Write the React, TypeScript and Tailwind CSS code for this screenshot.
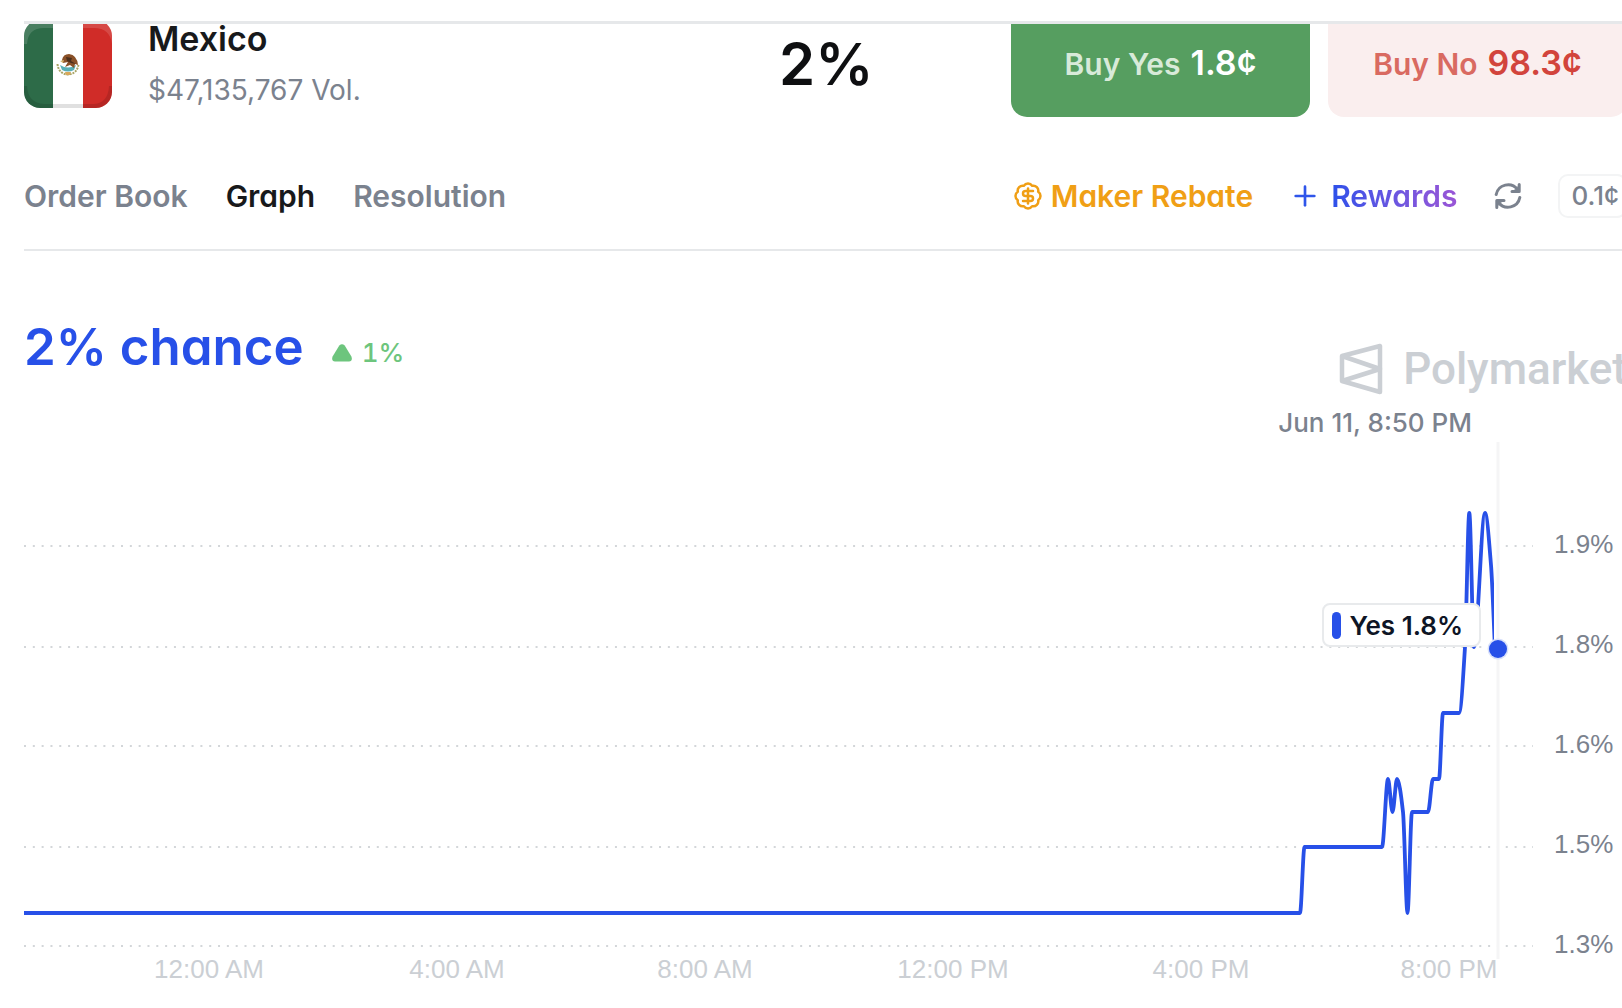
import { BadgeDollarSign, Plus } from 'lucide-react'

const tabs = ['Order Book', 'Graph', 'Resolution']
const yLabels = ['1.9%', '1.8%', '1.6%', '1.5%', '1.3%']
const xLabels = ['12:00 AM', '4:00 AM', '8:00 AM', '12:00 PM', '4:00 PM', '8:00 PM']
const gridLines = [106, 207, 306, 407, 506]

const points = [
  [0, 473], [1276, 473], [1280.5, 407], [1358, 407], [1364, 339], [1368.5, 372],
  [1373, 339], [1379, 372], [1383.5, 473], [1388, 372], [1404, 372], [1409, 339],
  [1415, 339], [1419, 273], [1435, 273], [1441, 207], [1445.3, 73], [1450, 207],
  [1461, 73], [1467, 125], [1471, 209],
]

// monotone cubic interpolation, so flat steps never overshoot
function linePath(pts: number[][]) {
  const slopes = pts.slice(1).map((p, i) => (p[1] - pts[i][1]) / (p[0] - pts[i][0]))
  const tangents = pts.map((_, i) => {
    const a = slopes[i - 1]
    const b = slopes[i]
    if (a === undefined) return b
    if (b === undefined) return a
    return a * b <= 0 ? 0 : (2 * a * b) / (a + b)
  })
  let d = `M${pts[0][0]},${pts[0][1]}`
  for (let i = 1; i < pts.length; i++) {
    const [x0, y0] = pts[i - 1]
    const [x1, y1] = pts[i]
    const h = (x1 - x0) / 3
    d += `C${x0 + h},${y0 + h * tangents[i - 1]} ${x1 - h},${y1 - h * tangents[i]} ${x1},${y1}`
  }
  return d
}

function MexicoFlag() {
  return (
    <svg
      className="h-[84px] w-[88px] shrink-0"
      viewBox="0 4 88 84"
      role="img"
      aria-label="Flag of Mexico"
    >
      <clipPath id="flag">
        <rect width="88" height="88" rx="16" />
      </clipPath>
      <g clipPath="url(#flag)">
        <rect width="88" height="88" fill="#fff" />
        <rect width="29" height="88" fill="#2d6b48" />
        <rect x="59" width="29" height="88" fill="#d02c28" />
        <path d="M0 0h88v24q-2-16-18-16H20Q4 8 3 24H0z" fill="#fff" opacity=".14" />
        <path d="M0 66h3q1 17 17 18h50q14-1 15-18h3v22H0z" fill="#000" opacity=".12" />
        <path
          d="M33.5 44c1 14 20 14 21 0"
          fill="none"
          stroke="#a9a566"
          strokeWidth="2"
          strokeDasharray="2 1"
        />
        <path d="M36 45q8 5 16 0l-2 5q-6 3-12 0z" fill="#58aeb5" />
        <path d="M41 52h6l-1 3h-4z" fill="#d9a85b" />
        <path d="M38 40q1-6 7-6 8 1 9 11l-3-1-1 4-4-3-5 2 3-5-5 1z" fill="#8a5128" />
        <path d="M42 37l6 1-1 3 5 3-5-1-4-2z" fill="#4c2f1c" />
        <path d="M36 41l4-1-1 3z" fill="#d6b36c" />
      </g>
    </svg>
  )
}

function RefreshIcon() {
  return (
    <svg
      className="size-7"
      viewBox="0 0 28 28"
      fill="none"
      stroke="currentColor"
      strokeWidth="3"
      strokeLinecap="round"
      strokeLinejoin="round"
    >
      <path d="M2.2 12.5A12 12 0 0 1 23.5 7.5" />
      <path d="M25.8 15.5A12 12 0 0 1 4.5 20.5" />
      <path d="M25.2 2.5v7h-7.2" />
      <path d="M2.8 25.5v-7h7.2" />
      <path d="M25 4v5h-5z" fill="currentColor" strokeWidth="1" />
      <path d="M3 24v-5h5z" fill="currentColor" strokeWidth="1" />
    </svg>
  )
}

function MarketHeader() {
  return (
    <header className="flex items-start border-t-3 border-[#e6e8ea]">
      <MexicoFlag />
      <div className="ml-9 flex-1">
        <h1 className="text-[34px] leading-[30px] font-semibold text-[#18191b]">Mexico</h1>
        <p className="mt-[18px] text-[28px] leading-9 text-[#7b828e]">$47,135,767 Vol.</p>
      </div>
      <div className="flex h-20 w-[232px] items-center text-[58px] font-semibold text-[#0e0f11]">
        2%
      </div>
      <div className="flex gap-[18px] font-semibold">
        <button className="flex h-[93px] w-[299px] items-baseline justify-center gap-[10px] rounded-b-2xl bg-[#569e60] pt-[13px] text-[30px] text-[#d8ead9]">
          Buy Yes <span className="text-[34px] text-white">1.8¢</span>
        </button>
        <button className="flex h-[93px] w-[299px] items-baseline justify-center gap-[10px] rounded-b-2xl bg-[#faeeee] pt-[13px] text-[30px] text-[#d96a61]">
          Buy No <span className="text-[34px] text-[#d2443c]">98.3¢</span>
        </button>
      </div>
    </header>
  )
}

function Toolbar() {
  return (
    <nav className="mt-[57px] flex items-center justify-between border-b-2 border-[#e6e8ea] pb-[31px] text-[30px] leading-[44px] font-semibold">
      <div className="flex gap-[38px]">
        {tabs.map((t) => (
          <button key={t} className={t === 'Graph' ? 'text-[#18191b]' : 'text-[#7b828e]'}>
            {t}
          </button>
        ))}
      </div>
      <div className="flex items-center">
        <button className="flex items-center gap-2 text-[#f09f15]">
          <BadgeDollarSign className="size-[30px]" strokeWidth={2} />
          Maker Rebate
        </button>
        <button className="ml-9 flex items-center gap-[10px] text-[#2f55ea]">
          <Plus className="size-8" strokeWidth={2} />
          <span className="bg-linear-to-r from-[#2a50ea] to-[#9a55d6] bg-clip-text text-transparent">
            Rewards
          </span>
        </button>
        <button aria-label="Refresh" className="ml-9 text-[#7b828e]">
          <RefreshIcon />
        </button>
        <button className="ml-9 h-11 rounded-[10px] border-2 border-[#f3f4f5] pr-[6px] pl-3 text-[26px] leading-10 font-medium text-[#7b828e]">
          0.1¢
        </button>
      </div>
    </nav>
  )
}

function Logo() {
  return (
    <div className="flex items-center gap-5 font-[Roboto,sans-serif] text-[44px] leading-[52px] font-medium text-[#cbcfd4]">
      <svg
        className="h-[52px] w-11"
        viewBox="0 0 44 52"
        fill="none"
        stroke="currentColor"
        strokeWidth="4.5"
        strokeLinejoin="round"
      >
        <path d="M41 3v46L3 38V13z" />
        <path d="M3 13l38 13L3 38" />
      </svg>
      Polymarket
    </div>
  )
}

function Chart() {
  return (
    <section>
      <div className="flex">
        <div className="relative flex-1">
          <svg className="w-full" viewBox="0 0 1509 519" fill="none">
            <clipPath id="plot">
              <rect width="1470" height="519" />
            </clipPath>
            {gridLines.map((y) => (
              <path
                key={y}
                d={`M0 ${y}H1509`}
                stroke="#d3d6d9"
                strokeWidth="2"
                strokeDasharray="2 6.82"
              />
            ))}
            <path d="M1474 2v517" stroke="#f5f5f6" strokeWidth="3" />
            <path
              d={linePath(points)}
              stroke="#2750e8"
              strokeWidth="3.8"
              strokeLinejoin="round"
              clipPath="url(#plot)"
            />
            <circle cx="1474" cy="209" r="10.5" fill="#d9e1fb" />
            <circle cx="1474" cy="209" r="9" fill="#2750e8" />
          </svg>
          <p className="absolute -top-[33px] right-[61px] text-[26px] leading-8 font-medium text-[#7b828e]">
            Jun 11, 8:50 PM
          </p>
          <div className="absolute top-[163px] right-[52px] flex h-11 items-center gap-2 rounded-lg border-2 border-[#e8eaec] bg-white pr-4 pl-2 text-[26px] font-semibold text-[#0e1525]">
            <span className="h-[27px] w-[9px] rounded-full bg-[#2750e8]" />
            Yes 1.8%
          </div>
        </div>
        <ul className="h-[519px] w-[94px] pt-[54px] pl-[21px] font-[Liberation_Sans,Arial,sans-serif] text-[26px] leading-[100px] text-[#7b828e]">
          {yLabels.map((l) => (
            <li key={l}>{l}</li>
          ))}
        </ul>
      </div>
      <ul className="grid grid-cols-6 pr-[54px] pb-7 pl-[61px] text-center font-[Liberation_Sans,Arial,sans-serif] text-[26px] leading-5 text-[#cbcfd4]">
        {xLabels.map((l) => (
          <li key={l}>{l}</li>
        ))}
      </ul>
    </section>
  )
}

export default function App() {
  return (
    <div className="overflow-hidden bg-white font-[Inter,sans-serif] [font-feature-settings:'cv11']">
      <main className="-mr-[5px] pt-[21px] pl-6">
        <MarketHeader />
        <Toolbar />
        <div className="flex h-[189px] items-start justify-between">
          <div className="flex items-center gap-7 pt-16">
            <h2 className="text-[51px] leading-16 font-semibold text-[#2750e8]">2% chance</h2>
            <p className="flex items-center gap-[10px] pt-[11px] text-[26px] leading-8 font-medium text-[#6dc57d] tabular-nums">
              <svg className="h-[18px] w-5" viewBox="0 0 20 18" fill="currentColor">
                <path d="M7.3 1.5Q10-1 12.7 1.5L19.4 12.5Q21 17 17 17.5H3Q-1 17 .6 12.5z" />
              </svg>
              1%
            </p>
          </div>
          <div className="pt-[92px]">
            <Logo />
          </div>
        </div>
        <Chart />
      </main>
    </div>
  )
}
